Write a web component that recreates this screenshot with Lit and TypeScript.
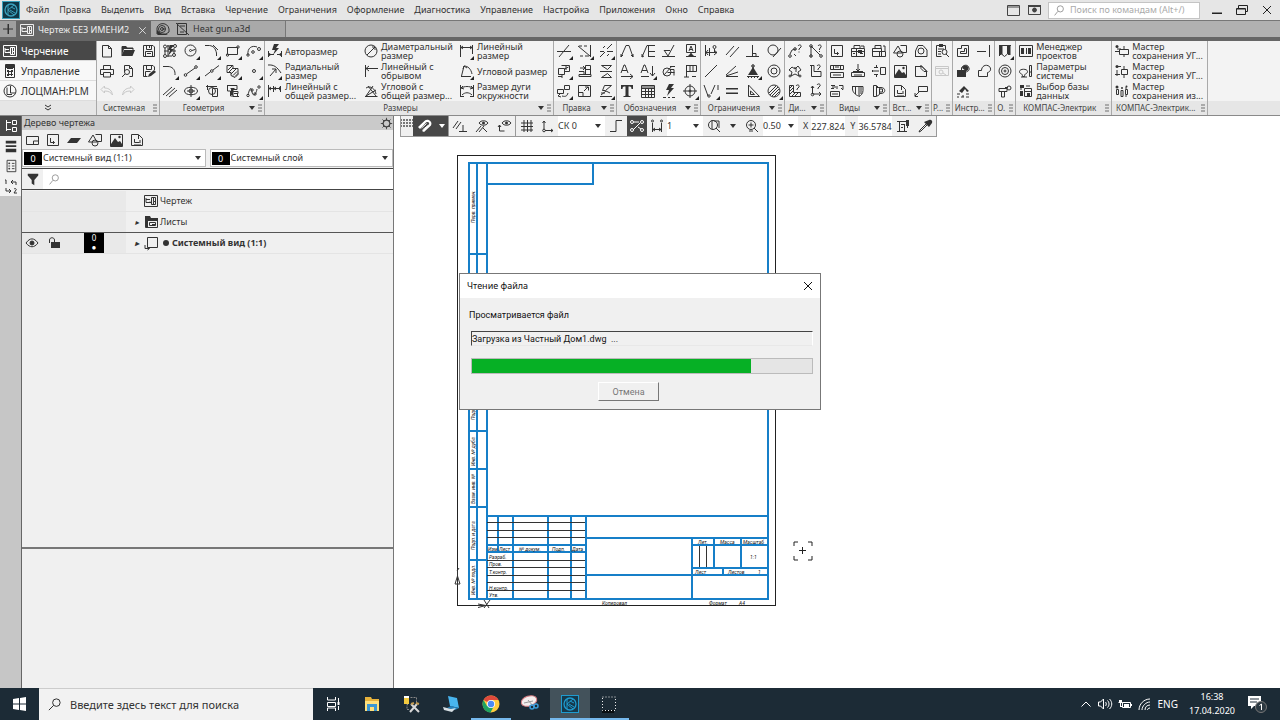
import { LitElement, html, css, svg, nothing } from "lit";
import { customElement } from "lit/decorators.js";

/** Circle expressed as a path segment. */
const c = (x: number, y: number, r: number) =>
  `M${x - r} ${y}a${r} ${r} 0 1 0 ${2 * r} 0a${r} ${r} 0 1 0 ${-2 * r} 0`;

/** name -> [stroked outline, filled shape]; 16x16 grid. */
const ICONS: Record<string, [string, string?]> = {
  sheet: ["M1.5 2.5h13v11h-13zM3 6.5h4M3 5v4.5h3l1-1M8.5 4.5h4v7h-4zM8.5 9.5h-3M10.5 4.5v4h2M10.5 8.5v3"],
  calc: ["M3.5 1.5h9v13h-9zM5 5.5h6M5 8.5h6M5 11.5h6M6.5 7v6M9.5 7v6", "M4 2h8v3H4zM5 7h2v2H5zM9 7h2v2H9zM5 11h2v2H5z"],
  plm: [c(8, 8, 6) + "M8.5 3v7h5M5 4.5v7h5"],
  newdoc: ["M3.5 2.5h6l3 3v8.5h-9zM9.5 2.5v3h3"],
  open: ["M2 12.5V3.5h4l1 1.5h6v2", "M1.5 13L4 7h11l-2.5 6zM2 3h4l1 2h6v1H4L2 11z"],
  save: ["M2.5 2.5h9.5l1.5 1.5v9.5h-11zM5.5 2.5v4h5v-4M8.5 3v2M4.5 13.5v-5h7v5M6 10.5h4"],
  print: ["M4.5 6V2.5h7V6M4.5 11.5h-3v-5h13v5h-3M4.5 9.5h7v4.5h-7z"],
  preview: ["M4.5 9V2.5h5l3 3v8h-3M9.5 2.5v3h3" + c(7, 9, 2.5) + "M5 11l-3 3"],
  saveas: ["M2.5 2.5h9.5l1.5 1.5v3M2.5 2.5v11h4M5.5 2.5v4h5v-4M4.5 13v-4.5h5", "M7 14l1-3 5-4 2 2-5 4z"],
  undo: ["M5.5 3L2 6.5l3.5 3.5V8c4 0 6 1 8 4-.5-4-3-7-8-7z"],
  redo: ["M10.5 3L14 6.5 10.5 10V8c-4 0-6 1-8 4 .5-4 3-7 8-7z"],
  autoline: [c(3, 3.5, 1.5) + c(13, 3, 1.5) + c(3, 13, 1.5) + c(12, 12, 1.5) + "M3 5v6M5 3h7M12 5v6M5 13h5M6 2v12M2 8h5M10 8h4", "M8 2h4L9 6h3l-6 7 2-6H6z"],
  circle: [c(7.5, 7.5, 5.5) + c(7.5, 7.5, 1) + "M9 7.5l3-1"],
  arcfillet: ["M1 2.5h4.5c4 .5 6 3 7 7.5V13M9 2l5 5"],
  rect: ["M2.5 4.5h10v7h-10z" + c(13, 4, 1.2) + c(2.5, 12, 1.2)],
  arc: ["M2 12C1 5 6 2 11 4" + c(13, 6, 1.5) + c(7, 9, 1.3) + c(2, 12, 1.2)],
  fillet: ["M1 3.5h5c4 0 7 3 7 7V12"],
  segment: ["M3.5 11L12 5" + c(2.5, 12, 1.3) + c(13, 4, 1.3)],
  auxline: ["M1 13L6.5 8.8M9 7l6-4.5" + c(7.8, 8, 1.3)],
  hatch: ["M2 2.5h6v3h5v6l-3 3-4-2v-3H2zM3 7l4-4M4 9l4-4M6 11l5-5M8 12.5l4-4M10 13.5l3-3"],
  point: [c(8, 8, 1.5)],
  parallel3: ["M1 12L10 4M4 13L13 5M7 14L15 7"],
  ellipse: ["M1.5 8c0-5 13-5 13 0s-13 5-13 0zM8 2v12M4 8h8" + c(8, 8, 2)],
  project: ["M2 3.5h11M3.5 2v5M8.5 5.5h5v8h-5z" + c(8, 8, 3.5)],
  collect: ["M2 2.5h10v4H8v7h6M2.5 2v6h3v5h3M5.5 5.5h4M6 8.5h7v2H9M12.5 11v3", "M6 6h2v6H6z"],
  spline: ["M2 12C4 4 5 4 6 9s4 3 5-3" + c(2, 12.5, 1.2) + c(6, 7, 1.2) + c(9, 11, 1.2) + c(13, 4, 1.2)],
  autodim: ["M1.5 8v6M14.5 8v6M2 11.5h5M10 11.5h4M3 10l-1 1.5L3 13M13 10l1 1.5-1 1.5", "M7 1h5L9 5h3l-6 7 2-5H5z"],
  raddim: ["M1 2c6-.5 9 2 13 8M3 13l6-7M9 10V6H5"],
  lindim: ["M1.5 2v12M6.5 3v6M13.5 3v6M2 5.5h12M4 4L2 5.5 4 7M9 4L7 5.5 9 7M12 4l2 1.5L12 7"],
  diadim: [c(8, 8, 6) + "M4 12L12 4M12 7V4H9"],
  breakdim: ["M2.5 2v12M3 5.5h12M6 3L3 5.5 6 8"],
  angcommon: ["M2 13.5h12.5M3 13L10 3M3 5c5-3 9 1 10 6M3 13l10-6M5 3l8 10"],
  lineardim: ["M1.5 2v12M13.5 2v9M2 4.5h11M4 3L2 4.5 4 6M11 3l2 1.5L11 6"],
  angdim: ["M2 13.5h10M2.5 13L5 3c4 0 7 3 8 8M4 6l1-3 3 2"],
  arcdim: ["M1.5 2v12M14.5 2v12M2 13.5h3M11 13.5h3M2 5c4-2 8-2 12 0M4 3L2 5l3 1M12 3l2 2-3 1M3 12c3-3 7-3 10 0"],
  trim: ["M1 8.5h14M3 14L13 2"],
  extend: ["M13.5 2v12M1 3l12 10M2 3h3M7 3h3M3 13h3M8 13h4"],
  split: ["M2 8.5h4M9 8.5h6M2 14L7 9M9 6l5-5M9 13l2-2M5 5l2-2"],
  move: ["M2.5 5.5h6v6h-6zM5.5 2.5h8v6h-5M8.5 6l4-2M2 13.5h4M6 12v3M10 2v5"],
  copy: ["M2 11.5h12v2H2zM2 8.5h5v3M8.5 2.5h5v9h-5zM3 5h5M6 3l2 2-2 2M9 6.5h4"],
  mirror: ["M2 8.5h12M3.5 2.5h10l-4 4zM3.5 14.5h10l-4-4z"],
  rotate: ["M1.5 6.5h6v4h-6zM8.5 2.5h5v4h-5zM5 14l-3-1 2-2M6 13c4 1 5 0 6-3"],
  scale: ["M1.5 2.5h12v11h-12zM2 9.5h4v4M7 8l4-4M8 4h3.5v3.5"],
  deform: ["M2 13.5h12M3 12l5-4 4 2M6.5 2.5h7l-6 5h-3zM3 10h4"],
  rough1: ["M2 14L7 2.5h3L14 14M12 12l2 2V11M2 11v3l2-2"],
  leader: ["M2 14L7 2.5h8M8 8.5h7M8 13.5h7M2 11v3l2-1M8.5 2v12"],
  roughness: ["M1 13.5h13M3 7l4 6L13 2M3 7.5h6"],
  base: ["M4.5 1.5h9v8h-9zM9 10v3M4 13.5h10M7 8l2-5 2 5M7.5 6.5h3", "M6 13l3-3 3 3z"],
  arrowA: ["M2 10L5 2h1l3 8M3 7.5h5M2 13.5h12M11 11l3 2.5L11 16"],
  arrowdown: ["M1 10L4 2h1l3 8M2 7.5h5M1 13.5h8M12.5 3v10M10 10l2.5 3L15 10"],
  weld: [c(6, 9, 4) + "M3 12l8-9M6.5 9.5h7M9 3.5h5M9 6.5h4v6"],
  flag: ["M4.5 2v12M4.5 2.5h10v6h-10zM8 2v6M11 2v6M2 14h5M10 13.5h4"],
  text: ["", "M2 2h12v4h-1.5C12.5 4 12 3.5 9.5 3.5V12c0 1 .5 1 2 1v1h-7v-1c1.5 0 2 0 2-1V3.5C4 3.5 3.5 4 3.5 6H2z"],
  table: ["M1.5 2.5h13v12h-13zM2 5.5h12M2 8.5h12M2 11.5h12M5.5 6v8M8.5 6v8M11.5 6v8M2 4h12"],
  bolt: ["M2 14.5h3M7 14.5h2M11 14.5h3", "M8 1h5l-3 4h3l-7 8 2-6H5z"],
  center: [c(8, 8, 5) + "M8 1v14M1 8h14" + c(8, 8, 1)],
  snap: ["M2.5 2v11M6.5 5v8M2 9.5h12M5 7L3 9.5 5 12M11 7l3 2.5-3 2.5M11.5 6v4" + c(11.5, 4, 1.5)],
  par: ["M2 12L10 3M6 14l9-10"],
  perp: ["M1 13.5h13M7.5 2v11M8 10.5h3v3"],
  tangent: [c(7, 7, 5) + "M7 14L15 5"],
  line: ["M2 14L14 2"],
  angle: ["M2 13.5h12M2 13l12-4M2 12L12 3"],
  fix: ["M8 2v4M2 13.5h12M3 15l1-1M6 15l1-1M9 15l1-1M12 15l1-1" + c(8, 3, 1.3), "M8 4l5 8H3z"],
  concentric: [c(8, 8, 6) + c(8, 8, 3)],
  sym: ["M1 2l4 11M12 2L8 11M15 2v5" + c(6, 13, 1.2)],
  equal: ["M2 6h12M2 10.5h12M2 5.5h12M2 10h12"],
  triangle: ["M3.5 2v11.5h11zM5.5 8v3.5h4z"],
  circlehatch: [c(8, 8, 6) + "M3 10l7-7M4 12l8-8M6 13l7-7M8 14l5-5"],
  dist: ["M3 11l2-4 4-1" + c(3, 13, 1.3) + c(8, 6, 1.3) + "M11 3c1-2 4-1 3 1l-2 2v1M12 8.5v1M7 11l2 2"],
  angmeas: ["M3 3l9 9M3 14V3" + c(3, 3, 1.3) + c(13, 13, 1.3) + c(3, 13, 1.3) + "M10 3c1-2 4-1 3 1l-1.5 2v1M11.5 8v1"],
  pts: ["M2 7l3-3 3 2 3-3 3 4-3 2 1 4-4-2-4 2 1-4z" + c(3, 13, 1) + c(13, 13, 1) + "M7 5c1-1 3 0 2 2v2"],
  area: ["M2 2.5h4v6h7v5H3.5V2.5M9 3c1-2 4-1 3 1l-2 2v1"],
  mass: ["M2.5 2.5h4v7h7v4h-11zM3 5l2-2M3 8l3-3M3 11l3-3M5 13l3-3M8 13l3-3M9 3c1-2 4-1 3 1l-2 2v1"],
  coords: ["M4.5 3v8h8M3 5l1.5-2L6 5M11 9l2 2-2 2M9 2c1-2 4-1 3 1l-2 2v1" + c(4.5, 11.5, 1.3)],
  view: ["M2.5 2.5h11v11h-11zM5.5 6v4.5h4M8 9l1.5 1.5L8 12"],
  views2: ["M1.5 5.5h13v8h-13zM4 5V2.5h6v3M2 8.5h12M6.5 6v8M10 10.5h3M3 10.5h2M11 3h3v2", "M8 7h4v3H8z"],
  views3: ["M1.5 5.5h9v8h-9zM4 5V2.5h6v3M2 8.5h8M12 3h2v5M8.5 8.5h6v5h-6z"],
  strip: ["M1.5 2.5h13v4h-13zM1.5 9.5h13v5h-13zM4.5 3v3M11.5 3v3M4 12h8M6 4h4"],
  section: ["M1.5 9.5h13v4h-13zM8 1v7M6 6l2 2 2-2M3 8.5h10M4 12h8"],
  break: ["M9.5 4.5h5v7h-5zM1 8h7M3 4.5h4M3 11.5h4M5.5 2v3M5.5 11v3M2 7l-1 1 1 1"],
  detail: ["M1.5 8.5h9v5h-9zM3 11h6M2 2.5h4M2 5.5h3M8 3v3M10 2.5h4v4M12 5l2 2M3 4h4"],
  local: ["M2 3.5h11v4c0 3-2 5-4 6V3.5M5.5 4v7M2.5 3v3c0 3 3 6 6 7M11 4v7"],
  cut: ["M2.5 2.5h3l3 3v6l-3 2h-3zM6 4.5h4c5 0 5 6 0 6H8M5.5 3v10M8.5 6h3v3h-3"],
  shapes: [c(8, 11, 3) + "M1.5 10L6 3l4 7zM8.5 2.5h6v7h-4"],
  detailshape: ["M2 13.5h12V7L10 2.5H5L2.5 8v5.5" + c(8, 8, 3)],
  image: ["M2.5 2.5h12v12h-12z", "M3 12l4-6 3 4 2-1 2 3v2H3z" + c(11.5, 5, 1.2)],
  insert: ["M2.5 3.5h6M2.5 3v10.5h11V9M8 2.5l6 6M8 2.5v3l3 3h3z"],
  link: ["M2.5 13.5v-11h7l4 4v7zM9.5 3v4M5.5 7v3.5h5M5 13h7M11 8v3"],
  callout: ["M5.5 3.5h9v5h-9zM6 9l-4 4M2 10v3.5h3"],
  report: ["M2.5 2.5h9v4M2.5 2.5v11h5M4 6h6M4 8.5h3M4 11h3" + c(10.5, 9, 2.5) + "M12 11l3 3", "M5 1h4v3H5z"],
  find: ["M1.5 3.5h13v9h-13zM2 5.5h12" + c(7, 9, 2) + "M9 10l3 2"],
  tool1: ["M2.5 5.5h4v-3h7v11h-11zM5.5 8.5h4v-3h2v5h-6z"],
  tool2: ["M1 8.5h9M13.5 2v12"],
  cloud: ["M6.5 7V5c1-3 6-4 7-1 2 3-1 5-3 5", "M2 7h9v7H2zM7 5c1-3 5-3 6-1s0 4-2 4z"],
  blob: ["M2.5 13.5v-6h3c0-4 4-7 8-4 3 4-1 6-2 6v4z"],
  pen: ["M2 11h3M7 13h2M11 11h3M2 14h2M6 14h3M11 14h3", "M4 8l5-5 5 5-2 1-2-3-3 4z"],
  hole: ["M2 2.5h12M4.5 3v8l3 2.5 3-2.5V3M2.5 3v10M13 3v9M5 3v9", "M2 3h2v9H2zM11 3h2v9h-2z"],
  hole2: [c(8, 8, 6) + c(8, 8, 3.5) + c(8, 8, 1)],
  bolt3: ["M2 5.5h8v3H2zM4.5 9v5h3V9M8 4.5h3" + c(12, 5, 2)],
  proj: ["M1.5 2.5h13v11h-13z", "M3 5h3v6H3zM8 5h1v6H8zM10 5h3v6h-3z"],
  params: ["M1.5 8.5c0-3 8-3 8 0s-3 1-3 5h-2c0-4-3-2-3-5zM11.5 2.5h2v11h-2zM11 9h3M3 14h6"],
  db: ["M6.5 5.5h7v8h-7zM7 8.5h6M2 4h3M2 6h2M2 9h3M2 12h3M8 3h4", "M2 2h4v3H2zM2 8h3v5H2zM9 10h3v3H9z"],
  wiz1: ["M5.5 6.5h9v5h-9zM1 8.5h4M3 6h4M10 3v3M10 12v2", c(3, 3.5, 1.5)],
  wiz2: ["M7.5 6.5h6v5h-6zM1 11.5h5M4 3.5h3M10 3v3M10 12v3M3 7v6", c(3, 3.5, 1.5)],
  wiz3: ["M2.5 6.5h2v5h-2zM7 7.5h2v6H7zM11.5 6.5h2v5h-2zM12 4v2M12 12v2", c(3, 4, 1.5) + c(8, 5, 1) + c(12.5, 3.5, 1)],
  clip: ["M3 8L8 3.5c2-1.5 6 0 5 3.5l-6 5.5M4.5 10l5-4.5M5.5 12l6-5", "M1 9l7-6.5c3-2 8 1 6 5L7 14l-2-1 7-6.5c1-2-1-3-3-2L3 11z"],
  snaps1: ["M1 10L6 3M4 11L9 4M7 13.5h8M11 7v6"],
  eyepar: ["M2 14L7 8M5 14l5-6M5 5c2-3 7-3 9 0-2 3-7 3-9 0M9 10l4 4", c(9.5, 5, 1.5)],
  eyedown: ["M3.5 7v6h5M2 9l1.5-2L5 9M6 5c2-3 7-3 9 0-2 3-7 3-9 0", c(10.5, 5, 1.5)],
  grid: ["M5 2v12M8.5 2v12M12 2v12M2 5h12M2 8.5h12M2 12h12"],
  cs: ["M4 3v8M5 12.5h8M2.5 5L4 3l1.5 2M11 11l2 1.5-2 1.5" + c(4, 12.5, 1.3)],
  step: ["M2 13.5h6v-11h6"],
  constr: ["M4 12l7-7M5 4h5M9 9l3 2" + c(3, 4, 1.5) + c(13, 4, 1.5) + c(3, 12, 1.5) + c(13, 12, 1.5)],
  stepdist: ["M3.5 5v9M12.5 5v9M4 11.5h8M6 10l-2 1.5L6 13M10 10l2 1.5-2 1.5" + c(3.5, 3, 1) + c(12.5, 3, 1)],
  zoomwin: [c(7, 7, 4.5) + "M6 2v9M10 10l4 4M8 3h5v7"],
  zoomin: [c(7, 7, 4.5) + "M4.5 7h5M7 4.5v5M10 10l4 4M5 13h4"],
  coordset: ["M2 3.5h12M4.5 4v9M6 6.5h4M9.5 7v6M12.5 4v6M2 13.5h10M6 9.5h2", "M11 2h3v6h-3z"],
  dropper: ["M9 6l-6 6-1 2 2-1 6-6", "M7 4l5 5 3-4c1-2-1-4-3-3z"],
  tree: ["M3.5 2v11M4 4.5h4M4 11.5h4M9.5 2.5h4v4h-4zM9.5 9.5h4v4h-4z"],
  layers: ["", "M2 2h12v3H2zM2 7h12v2H2zM2 11h12v4H2z"],
  listprops: ["M3.5 1.5h10v13h-10zM5 5h2M9 5h3M5 8h2M9 8h3M5 11h2M9 11h3M6 4v2M6 10v2"],
  onetwo: ["M2 2h1v4M8 4h5v3M10 2L8 4l2 2M3 10v3h4M6 11l2 2-2 2M11 11c1-1 3 0 2 1l-2 3h3"],
  page: ["M2.5 4.5h12v8h-12zM9.5 12v-3h5"],
  slab: ["", "M5 6h10l-4 5H1z"],
  folder: ["M2.5 4.5h12v9h-12zM6.5 8.5h6v3h-6z", "M2 2h5l1 2h7v3H5v6H2zM9 10h3v2H9z"],
  frame: ["M4.5 2.5h10v10h-10zM2 10v3.5h4M4.5 15l2-1.5-2-1.5"],
  eye: ["M2 8c4-5.5 8-5.5 12 0-4 5-8 5-12 0" + c(8, 8, 2), c(8, 8, 2)],
  lock: ["M3.5 8V5c0-3 5-3 5 0v2", "M5 7h9v6H5z"],
  funnel: ["", "M2 2h12v2L9.5 9v6l-3-2V9L2 4z"],
  lens: [c(9, 6, 3.8) + "M6 9l-4 5"],
  gear: [c(8, 8, 4.5) + c(8, 8, 4) + "M8 1v3M8 12v3M1 8h3M12 8h3M3 3l2 2M11 11l2 2M13 3l-2 2M5 11l-2 2"],
  win: ["M2.5 3.5h12v10h-12zM3 5h11"],
  wingear: ["M2.5 3.5h12v9h-12z" + c(8.5, 8, 2), "M2 3h13v2H2zM7 6h3v4H7z"],
  min: ["M3 11h10M3 11.5h10"],
  restore: ["M2.5 6.5h9v6h-9zM4.5 6V3.5h9v6h-2M3 7h8"],
  close: ["M4 4l8 8M12 4l-8 8"],
  plus: ["M8 3v10M3 8h10M8.5 3v10"],
  gun: [c(7, 8, 3.5) + "M2 12V7c1-6 11-6 12 1v3l-3 2H2zM7 8h3" + c(7, 8, 1.5), "M2 12V9l5 4h6l-2 1H3z"],
  nodraw: ["M3.5 2.5h9v11h-9zM2 2l13 12M6 5h5M6 11h4"],
};

const icon = (name: string, size = 16) => {
  const [d, f] = ICONS[name];
  return html`<svg class="ic" width=${size} height=${size} viewBox="0 0 16 16" aria-hidden="true">
    ${f ? svg`<path class="fill" d=${f} />` : nothing}${d ? svg`<path class="line" d=${d} />` : nothing}
  </svg>`;
};

type Group = { title: string; cols: number; more?: boolean; tools: string[] };

/* A trailing "*" marks a tool that opens a list of variants, "-" a disabled one. */
const left: Group[] = [
  { title: "Системная", cols: 3, tools: ["newdoc", "open", "save", "print", "preview", "saveas", "undo-", "redo-"] },
  {
    title: "Геометрия", cols: 5, more: true,
    tools: ["autoline", "circle*", "arcfillet*", "rect*", "arc*", "fillet*", "segment*", "auxline*", "hatch*", "point*", "parallel3", "ellipse*", "project", "collect", "spline*"],
  },
];
const right: Group[] = [
  { title: "Правка", cols: 3, more: true, tools: ["trim*", "extend*", "split*", "move*", "copy", "mirror", "rotate*", "scale", "deform*"] },
  {
    title: "Обозначения", cols: 4, more: true,
    tools: ["rough1", "leader", "roughness", "base", "arrowA", "arrowdown*", "weld", "flag", "text", "table", "bolt", "center*"],
  },
  {
    title: "Ограничения", cols: 4, more: true,
    tools: ["snap", "par", "perp", "tangent", "line", "angle", "fix*", "concentric", "sym*", "equal", "triangle", "circlehatch*"],
  },
  { title: "Ди...", cols: 2, more: true, tools: ["dist", "angmeas", "pts", "area", "mass", "coords"] },
  { title: "Виды", cols: 3, more: true, tools: ["view", "views2", "views3", "strip", "section", "break", "detail", "local", "cut"] },
  { title: "Вст...", cols: 2, more: true, tools: ["shapes", "detailshape", "image", "insert", "link", "callout"] },
  { title: "Р...", cols: 1, tools: ["report", "find-"] },
  { title: "Инстр...", cols: 2, tools: ["tool1", "tool2", "cloud", "blob", "pen"] },
  { title: "О.", cols: 1, tools: ["hole*", "hole2", "bolt3"] },
];

const dims: [string, string, boolean][] = [
  ["autodim", "Авторазмер", false], ["diadim", "Диаметральный\nразмер", false], ["lineardim", "Линейный\nразмер", true],
  ["raddim", "Радиальный\nразмер", true], ["breakdim", "Линейный с\nобрывом", false], ["angdim", "Угловой размер", true],
  ["lindim", "Линейный с\nобщей размер...", false], ["angcommon", "Угловой с\nобщей размер...", false], ["arcdim", "Размер дуги\nокружности", false],
];

@customElement("app-root")
export class AppRoot extends LitElement {
  static styles = css`
    :host {
      display: flex; flex-direction: column; height: 100vh; overflow: hidden;
      font-family: "Noto Sans", "Open Sans", sans-serif; font-size: 9px; line-height: 14px; color: #333; background: #fff;
    }
    * { box-sizing: border-box; }
    button, input, select { font: inherit; color: inherit; background: none; border: 0; padding: 0; margin: 0; min-width: 0; border-radius: 0; outline: 0; }
    select { appearance: none; }
    .ic { display: block; flex: none; }
    .line { fill: none; stroke: currentColor; }
    .fill { fill: currentColor; }
    .grow { flex: 1; }

    .menubar { flex: none; display: flex; align-items: center; height: 20px; background: #e6e6e6; }
    .logo { width: 18px; height: 18px; margin: 0 6px 0 2px; }
    .menu { display: flex; gap: 10px; white-space: nowrap; }
    .wincmd { display: flex; align-items: center; gap: 5px; margin-right: 6px; color: #444; }
    .cmdsearch { display: flex; align-items: center; gap: 4px; width: 152px; height: 17px; padding: 0 4px; background: #fff; border: 1px solid #c4c4c4; color: #888; }
    .cmdsearch input { flex: 1; }
    .cmdsearch input::placeholder { color: #aaa; opacity: 1; }
    .winbtns { display: flex; gap: 9px; margin: 0 5px 0 9px; color: #222; }

    .tabs { flex: none; display: flex; height: 21px; background: #b1b1b1; border-top: 1px solid #777; border-bottom: 4px solid #666; }
    .addtab { width: 16px; background: #9f9f9f; }
    .addtab .ic { margin: 0 auto; }
    .tab { display: flex; align-items: center; gap: 3px; padding: 0 4px; white-space: nowrap; }
    .tab.on { width: 135px; background: #666; color: #eee; height: 18px; padding: 0 2px 0 3px; }
    .tab.other { width: 135px; border-right: 1px solid #777; background: #a9a9a9; }

    .ribbon { flex: none; display: flex; height: 75px; background: #f3f3f3; border-bottom: 1px solid #8a8a8a; }
    .nav { width: 96px; display: flex; flex-direction: column; background: #f8f8f8; }
    .nav button { height: 20px; display: flex; align-items: center; gap: 3px; padding-left: 2px; border-bottom: 1px solid #ddd; font-size: 10px; }
    .nav button.on { background: #484848; color: #fff; }
    .nav button.fold { flex: 1; justify-content: center; padding: 0; background: #e6e6e6; border: 0; }
    .group { flex: none; display: flex; flex-direction: column; box-shadow: inset 1px 0 #a9a9a9; }
    .rest { flex: 1; }
    .cells { display: grid; grid-auto-rows: 20px; grid-template-rows: repeat(3, 20px); flex: 1; }
    .c1 { grid-template-columns: 21px; } .c2 { grid-template-columns: repeat(2, 21px); }
    .c3 { grid-template-columns: repeat(3, 21px); } .c4 { grid-template-columns: repeat(4, 21px); }
    .c5 { grid-template-columns: repeat(5, 21px); }
    .tool { position: relative; display: flex; align-items: center; justify-content: center; }
    .tool.off { color: #c8c8c8; }
    .var::after { content: ""; position: absolute; right: 1px; bottom: 1px; border: 2px solid #222; border-top-color: transparent; border-left-color: transparent; }
    .foot { height: 14px; display: flex; align-items: center; justify-content: flex-end; gap: 3px; padding: 0 2px 0 1px; margin-left: 1px; font-size: 8px; line-height: 14px; background: #e6e6e6; white-space: nowrap; color: #444; }
    .foot span { flex: 1; text-align: center; }
    .down { width: 0; height: 0; flex: none; border: 3px solid transparent; border-top: 4px solid #333; border-bottom: 0; pointer-events: none; }
    .grip { flex: none; width: 4px; height: 8px; background: radial-gradient(circle at 1px 1px, #aaa 1px, transparent 1px) 0 0 / 2px 3px; }
    .dims { grid-template-columns: 96px 96px 97px; }
    .wide { grid-template-columns: 96px; }
    .lab { display: flex; align-items: center; gap: 2px; padding-left: 3px; line-height: 9px; text-align: left; position: relative; white-space: pre; }
    .lab.var::after { left: 14px; right: auto; }

    .main { flex: 1; display: flex; min-height: 0; }
    .rail { flex: none; width: 22px; background: #c6c6c6; border-right: 1px solid #666; }
    .rail button { width: 100%; height: 20px; display: flex; align-items: center; justify-content: center; background: #f2f2f2; }
    .rail button.on { background: #484848; color: #fff; }
    .tree { flex: none; width: 372px; display: flex; flex-direction: column; background: #f0f0f0; border-right: 1px solid #777; }
    .title { height: 14px; display: flex; align-items: center; justify-content: space-between; padding: 0 0 0 2px; background: #cacaca; }
    .strip { height: 19px; display: flex; align-items: center; gap: 5px; padding-left: 2px; }
    .picks { height: 20px; display: flex; gap: 4px; padding-bottom: 1px; border-bottom: 1px solid #444; }
    .pick { flex: 1; display: flex; align-items: center; background: #fff; border: 1px solid #bbb; padding: 0 4px 0 1px; }
    .pick select { flex: 1; }
    .zero { width: 18px; height: 13px; line-height: 13px; text-align: center; background: #000; color: #fff; margin-right: 1px; }
    .filter { height: 21px; display: flex; align-items: center; background: #fff; border-bottom: 1px solid #444; color: #333; }
    .filter .fun { width: 21px; height: 20px; background: #f0f0f0; display: flex; align-items: center; justify-content: center; }
    .filter input { flex: 1; margin-left: 6px; }
    .look { color: #888; margin-left: 5px; }
    .rows { flex: none; height: 359px; border-bottom: 2px solid #777; padding-top: 1px; }
    .row { height: 21px; display: flex; border-bottom: 1px solid #e4e4e4; }
    .row.cur { margin-top: -1px; border-top: 1px solid #555; font-weight: 700; height: 22px; }
    .flags { width: 104px; display: flex; align-items: center; background: #e9e9e9; padding-left: 2px; }
    .cur .flags .ic + .ic { margin-left: 6px; }
    .layer { width: 20px; height: 20px; margin-left: 22px; background: #000; color: #fff; font-size: 8px; line-height: 9px; text-align: center; font-weight: 400; }
    .name { flex: 1; display: flex; align-items: center; gap: 1px; padding-left: 6px; }
    .twist { width: 10px; font-size: 8px; text-align: center; }
    .dot { width: 6px; height: 6px; border-radius: 50%; background: #333; margin: 0 2px 0 3px; }

    .canvas { position: relative; flex: 1; background: #fff; min-width: 0; }
    .bar { display: flex; align-items: center; width: max-content; height: 21px; margin-left: 6px; background: #f0f0f0; border: 1px solid #999; border-top: 0; }
    .bar > button { width: 22px; height: 20px; display: flex; align-items: center; justify-content: center; }
    .bar > button.dark { background: #484848; color: #fff; }
    .bar > button.magnet { width: 36px; gap: 6px; border-right: 1px solid #999; }
    .magnet .down { border-top-color: #fff; }
    .bar > .down { margin: 0 5px; }
    .bar > button.sep { width: 23px; border-right: 1px solid #999; }
    .bar > button.slim { width: 20px; }
    .bargrip { width: 12px; height: 8px; align-self: flex-start; margin-top: 3px; background: radial-gradient(circle at 1px 1px, #777 1px, transparent 1px) 2px 0 / 3px 3px; }
    .combo { display: flex; align-items: center; height: 20px; background: #fff; padding-right: 4px; }
    .combo select { flex: 1; overflow: hidden; white-space: nowrap; }
    .combo.cs { width: 47px; } .combo.num { width: 36px; } .combo.zoomc { width: 35px; }
    .xy { display: flex; align-items: center; height: 20px; gap: 3px; padding-left: 5px; }
    .xy input { width: 34px; height: 20px; background: #fff; }
    .sheet { display: block; margin: 13px 0 0 56px; }
    .edge { fill: none; stroke: #222; }
    .thick { fill: none; stroke: #167fc8; stroke-width: 2; }
    .thin { fill: none; stroke: #333; }
    .gost { font: italic 5px Roboto, sans-serif; fill: #111; }
    .cursor { position: absolute; left: 398px; top: 424px; }

    .dialog { position: absolute; left: 65px; top: 157px; width: 362px; background: #f0f0f0; border: 1px solid #777; color: #111; line-height: 14px; }
    .dtitle { height: 24px; display: flex; align-items: center; justify-content: space-between; padding: 0 4px 0 7px; background: #fff; }
    .dbody { padding: 9px 7px 8px 9px; display: flex; flex-direction: column; font-family: Roboto, "Liberation Sans", sans-serif; }
    .dbody label { height: 16px; line-height: 16px; }
    .file { height: 15px; margin: 8px 0 12px 2px; border-top: 1px solid #444; border-left: 1px solid #444; border-bottom: 1px solid #e8e8e8; border-right: 1px solid #fff; }
    progress { appearance: none; display: block; width: auto; height: 16px; margin-left: 2px; background: #e5e5e5; border: 1px solid #bbb; }
    progress::-webkit-progress-bar { background: #e5e5e5; }
    progress::-webkit-progress-value { background: #06b025; }
    .cancel { align-self: center; width: 61px; height: 19px; margin: 8px 25px 0 0; color: #777; border: 1px solid #fff; border-right-color: #777; border-bottom-color: #777; }

    .taskbar { flex: none; display: flex; align-items: center; height: 32px; background: #1c2b36; color: #fff; }
    .start { width: 39px; display: flex; justify-content: center; }
    .tsearch { display: flex; align-items: center; gap: 8px; width: 274px; height: 32px; padding: 0 8px; background: #f2f2f2; color: #222; font-size: 11px; border-top: 1px solid #ccc; }
    .tsearch input { flex: 1; }
    .tsearch input::placeholder { color: #333; opacity: 1; }
    .apps { display: flex; width: 316px; }
    .app { flex: 1; height: 32px; display: flex; align-items: center; justify-content: center; border-bottom: 2px solid transparent; border-top: 2px solid transparent; }
    .app.run { border-bottom-color: #76b9ed; }
    .app.on { background: #43525b; }
    .tray { display: flex; align-items: center; gap: 5px; }
    .lang { margin: 0 6px 0 2px; font-size: 10px; }
    .clock { text-align: center; line-height: 14px; }
    .note { margin: 0 13px 0 7px; }
  `;

  private tool(t: string) {
    const name = t.replace(/[*-]$/, "");
    const off = t.endsWith("-");
    return html`<button class="tool ${t.endsWith("*") ? "var" : ""} ${off ? "off" : ""}" aria-label=${name} ?disabled=${off}>${icon(name)}</button>`;
  }

  private foot(title: string, more = false) {
    return html`<div class="foot"><span>${title}</span>${more ? html`<i class="down"></i>` : nothing}<i class="grip"></i></div>`;
  }

  private group(g: Group) {
    return html`<section class="group"><div class="cells c${g.cols}">${g.tools.map((t) => this.tool(t))}</div>${this.foot(g.title, g.more)}</section>`;
  }

  private label(name: string, text: string, variants = false) {
    return html`<button class="lab ${variants ? "var" : ""}">${icon(name)}<span>${text}</span></button>`;
  }

  private kompas(size: number, bg: string, fg: string) {
    return html`<svg class="ic" width=${size} height=${size} viewBox="0 0 18 18" aria-hidden="true">
      <rect x=".5" y=".5" width="17" height="17" fill=${bg} stroke=${fg} />
      <circle cx="9" cy="9" r="6" fill="none" stroke=${fg} stroke-width="1.3" />
      <path d="M6 4v10M6 9l6-5M6 9l6 5M8 9l5 3M9 6l4 2" fill="none" stroke=${fg} />
    </svg>`;
  }

  private sheet() {
    const side: [number, number, string][] = [
      [475, 223, "Перв. примен."], [475, 420, "Подп."], [475, 466, "Инв. № дубл."], [475, 504, "Взам. инв. №"], [475, 550, "Подп. и дата"], [475, 595, "Инв. № подл."],
    ];
    const words: [number, number, string][] = [
      [488, 551, "Изм"], [499, 551, "Лист"], [519, 551, "№ докум."], [552, 551, "Подп."], [572, 551, "Дата"],
      [489, 559, "Разраб."], [489, 566, "Пров."], [489, 574, "Т.контр."], [489, 590, "Н.контр."], [489, 597, "Утв."],
      [698, 544, "Лит."], [720, 544, "Масса"], [743, 544, "Масштаб"], [750, 559, "1:1"], [695, 574, "Лист"], [728, 574, "Листов"], [758, 574, "1"],
      [602, 605, "Копировал"], [709, 605, "Формат"], [739, 605, "A4"],
    ];
    return html`<svg class="sheet" width="330" height="462" viewBox="450 150 330 462">
      <rect class="edge" x="457.5" y="155.5" width="318" height="450" />
      <path class="thick" d="M469 163h299v436H469zM477 163v436M487 163v436M469 254h18M469 431h18M469 469h18M469 507h18M469 560h18
        M487 184h106v-21M487 516h281M487 545h99M487 552h99M498 516v36M513 516v83M548 516v83M571 516v83M586 516v83
        M586 538h182M586 575h182M692 538v61M692 545h76M692 568h76M714 538v30M741 538v30M723 568v7" />
      <path class="thin" d="M487 522.5h98M487 530.5h98M487 537.5h98M487 560.5h98M487 567.5h98M487 575.5h98M487 582.5h98M487 590.5h98M699.5 546v21M706.5 546v21
        M457.5 585v-14M455 584l2.5-8 2.5 8zM457 571l2-3M476 605.5h7M478 604l8 1.5-8 2M484 600l5 8M490 600l-6 8" />
      ${words.map(([x, y, t]) => svg`<text class="gost" x=${x} y=${y}>${t}</text>`)}
      ${side.map(([x, y, t]) => svg`<text class="gost" transform="translate(${x} ${y}) rotate(-90)">${t}</text>`)}
    </svg>`;
  }

  private combo(kind: string, label: string, value: string) {
    return html`<span class="combo ${kind}"><select aria-label=${label}><option>${value}</option></select><i class="down"></i></span>`;
  }

  render() {
    const menu = ["Файл", "Правка", "Выделить", "Вид", "Вставка", "Черчение", "Ограничения", "Оформление", "Диагностика", "Управление", "Настройка", "Приложения", "Окно", "Справка"];
    return html`
      <header class="menubar">
        <span class="logo">${this.kompas(18, "#103646", "#3ba0bd")}</span>
        <nav class="menu">${menu.map((m) => html`<button>${m}</button>`)}</nav>
        <span class="grow"></span>
        <span class="wincmd">${icon("win")}${icon("wingear")}</span>
        <label class="cmdsearch">${icon("lens", 13)}<input aria-label="Поиск по командам" placeholder="Поиск по командам (Alt+/)" /></label>
        <span class="winbtns">
          <button aria-label="Свернуть">${icon("min")}</button><button aria-label="Восстановить">${icon("restore")}</button><button aria-label="Закрыть">${icon("close")}</button>
        </span>
      </header>

      <div class="tabs">
        <button class="addtab" aria-label="Создать">${icon("plus")}</button>
        <button class="tab on">${icon("sheet")}Чертеж БЕЗ ИМЕНИ2<span class="grow"></span>${icon("close", 13)}</button>
        <button class="tab other">${icon("gun")}${icon("nodraw")}Heat gun.a3d</button>
      </div>

      <div class="ribbon">
        <nav class="nav">
          <button class="on">${icon("sheet")}Черчение</button>
          <button>${icon("calc")}Управление</button>
          <button>${icon("plm")}ЛОЦМАН:PLM</button>
          <button class="fold" aria-label="Свернуть список"><svg class="ic" width="8" height="8" viewBox="0 0 8 8"><path class="line" d="M1 1l3 2 3-2M1 4l3 2 3-2" /></svg></button>
        </nav>
        ${left.map((g) => this.group(g))}
        <section class="group">
          <div class="cells dims">${dims.map(([i, t, v]) => this.label(i, t, v))}</div>
          ${this.foot("Размеры", true)}
        </section>
        ${right.map((g) => this.group(g))}
        <section class="group">
          <div class="cells wide">${this.label("proj", "Менеджер\nпроектов")}${this.label("params", "Параметры\nсистемы")}${this.label("db", "Выбор базы\nданных")}</div>
          ${this.foot("КОМПАС-Электрик")}
        </section>
        <section class="group">
          <div class="cells wide">${this.label("wiz1", "Мастер\nсохранения УГ...")}${this.label("wiz2", "Мастер\nсохранения УГ...")}${this.label("wiz3", "Мастер\nсохранения из...")}</div>
          ${this.foot("КОМПАС-Электрик...")}
        </section>
        <div class="group rest"><span class="grow"></span><div class="foot"></div></div>
      </div>

      <main class="main">
        <div class="rail">
          <button class="on" aria-label="Дерево">${icon("tree")}</button><button aria-label="Слои">${icon("layers", 14)}</button>
          <button aria-label="Параметры">${icon("listprops", 14)}</button><button aria-label="Переменные">${icon("onetwo")}</button>
        </div>
        <aside class="tree">
          <div class="title">Дерево чертежа<button aria-label="Настройка">${icon("gear", 13)}</button></div>
          <div class="strip">${["page", "view", "slab", "shapes", "image", "link"].map((n) => html`<button aria-label=${n}>${icon(n)}</button>`)}</div>
          <div class="picks">
            <label class="pick"><span class="zero">0</span><select><option>Системный вид (1:1)</option></select><i class="down"></i></label>
            <label class="pick"><span class="zero">0</span><select><option>Системный слой</option></select><i class="down"></i></label>
          </div>
          <div class="filter"><button class="fun" aria-label="Фильтр">${icon("funnel", 14)}</button><span class="look">${icon("lens", 13)}</span><input aria-label="Поиск в дереве" /></div>
          <div class="rows">
            <div class="row"><span class="flags"></span><span class="name"><i class="twist"></i>${icon("sheet")}Чертеж</span></div>
            <div class="row"><span class="flags"></span><span class="name"><i class="twist">▸</i>${icon("folder")}Листы</span></div>
            <div class="row cur">
              <span class="flags">${icon("eye")}${icon("lock")}<span class="layer">0<br />●</span></span>
              <span class="name"><i class="twist">▸</i>${icon("frame")}<i class="dot"></i>Системный вид (1:1)</span>
            </div>
          </div>
        </aside>

        <section class="canvas">
          <div class="bar">
            <span class="bargrip"></span>
            <button class="dark magnet" aria-label="Привязки">${icon("clip")}<i class="down"></i></button>
            ${["snaps1", "eyepar"].map((n) => html`<button aria-label=${n}>${icon(n)}</button>`)}
            <button class="sep" aria-label="Показать">${icon("eyedown")}</button>
            <button aria-label="Сетка">${icon("grid")}</button>
            <button class="slim" aria-label="Система координат">${icon("cs")}</button>
            ${this.combo("cs", "Система координат", "СК 0")}
            <button aria-label="Ортогональное черчение">${icon("step")}</button>
            <button class="dark slim" aria-label="Параметрический режим">${icon("constr")}</button>
            <button class="slim" aria-label="Шаг курсора">${icon("stepdist")}</button>
            ${this.combo("num", "Шаг", "1")}
            <button aria-label="Масштаб">${icon("zoomwin")}</button>
            <i class="down"></i>
            <button aria-label="Увеличить">${icon("zoomin")}</button>
            ${this.combo("zoomc", "Масштаб", "0.50")}
            <label class="xy">X<input value="227.8244" /></label>
            <label class="xy">Y<input value="36.57842" /></label>
            <button aria-label="Координаты">${icon("coordset")}</button>
            <button aria-label="Пипетка">${icon("dropper")}</button>
          </div>
          ${this.sheet()}
          <svg class="cursor" width="22" height="22" viewBox="0 0 22 22"><path class="edge" d="M2 6V2h4M16 2h4v4M2 16v4h4M20 16v4h-4M10.5 7v7M7 10.5h7" /></svg>

          <div class="dialog" role="dialog" aria-label="Чтение файла">
            <div class="dtitle">Чтение файла<button aria-label="Закрыть">${icon("close")}</button></div>
            <div class="dbody">
              <label for="file">Просматривается файл</label>
              <input id="file" class="file" readonly value="Загрузка из Частный Дом1.dwg  ..." />
              <progress aria-label="Загрузка" max="100" value="82"></progress>
              <button class="cancel">Отмена</button>
            </div>
          </div>
        </section>
      </main>

      <footer class="taskbar">
        <button class="start" aria-label="Пуск"><svg class="ic" width="14" height="14" viewBox="0 0 14 14"><path class="fill" d="M0 2l6-1v5.5H0zM7 1l6-1v6.5H7zM0 7.5h6V13l-6-1zM7 7.5h6V14l-6-1z" /></svg></button>
        <label class="tsearch"><svg class="ic" width="15" height="15" viewBox="0 0 16 16"><path class="line" d="M6 6a4 4 0 1 0 8 0a4 4 0 1 0-8 0M7 9l-5 5" /></svg><input aria-label="Поиск" placeholder="Введите здесь текст для поиска" /></label>
        <div class="apps">
          <button class="app" aria-label="Представление задач"><svg class="ic" width="16" height="16" viewBox="0 0 16 16"><path class="line" d="M2.5 1v3h8V1M2.5 6.5h8v4h-8zM2.5 15v-3h8v3M13.5 2v5M13.5 10v4" /><path class="fill" d="M12.5 6h2v3h-2z" /></svg></button>
          <button class="app" aria-label="Проводник"><svg class="ic" width="18" height="18" viewBox="0 0 18 18"><path fill="#e8b33c" d="M2 2h6l1 2h7v12H2z" /><path fill="#ffdf7a" d="M2 6h14v10H2z" /><path fill="#3b96d2" d="M4 9h10v7h-3v-4H7v4H4z" /></svg></button>
          <button class="app" aria-label="Инструменты"><svg class="ic" width="18" height="18" viewBox="0 0 18 18"><path fill="#f3ca3f" d="M1 1h5v8H1z" /><path fill="#fff" d="M1 1h5v2H1z" /><path d="M7.5 2.5h6v6M5 9.5h-1v5h3" fill="none" stroke="#888" stroke-dasharray="2 1" /><path d="M7 17l7-8M8 9l8 8" stroke="#d8d8d8" stroke-width="2" /><path d="M8 9l3-1M13 8l3 1" stroke="#c49c52" stroke-width="2" /></svg></button>
          <button class="app" aria-label="Удалённый доступ"><svg class="ic" width="18" height="18" viewBox="0 0 18 18"><path fill="#48b5ef" d="M6 1l9 2 2 10-9-2z" /><path fill="#2582bd" d="M9 11l8 2-4 2-8-2z" /><path fill="#d7e0e5" d="M1 12l8 2 5-1-4 4-8-2z" /></svg></button>
          <button class="app run" aria-label="Chrome"><svg class="ic" width="18" height="18" viewBox="0 0 18 18"><circle cx="9" cy="9" r="8.5" fill="#ffcd40" /><path fill="#df4a3c" d="M9 9L1.5 5A8.5 8.5 0 0 1 16.5 5H9z" /><path fill="#1ea362" d="M1.5 5A8.5 8.5 0 0 0 8.5 17.5L12 11 9 9 5 11z" /><circle cx="9" cy="9" r="4" fill="#fff" /><circle cx="9" cy="9" r="3.2" fill="#4c8bf5" /></svg></button>
          <button class="app" aria-label="Ножницы"><svg class="ic" width="20" height="20" viewBox="0 0 20 20"><ellipse cx="9" cy="7" rx="8" ry="5" transform="rotate(-18 9 7)" fill="#f4eeee" stroke="#d37b80" /><path d="M4 9l9-2M8 6l5 6" stroke="#999" /><circle cx="12" cy="13" r="2" fill="none" stroke="#3a9bd8" stroke-width="1.5" /><circle cx="16" cy="12" r="2" fill="none" stroke="#3a9bd8" stroke-width="1.5" /></svg></button>
          <button class="app run on" aria-label="КОМПАС">${this.kompas(18, "#16394c", "#1f9bcf")}</button>
          <button class="app run" aria-label="Запись экрана"><svg class="ic" width="18" height="18" viewBox="0 0 18 18"><path fill="#0a0f12" d="M2 15h12v3H2z" /><path d="M2.5 2h13v13.5h-13z" fill="none" stroke="#eee" stroke-dasharray="1 2" /></svg></button>
        </div>
        <span class="grow"></span>
        <div class="tray">
          <svg class="ic" width="12" height="12" viewBox="0 0 12 12"><path class="line" d="M1.5 8.5L6 4l4.5 4.5" /></svg>
          <svg class="ic" width="16" height="16" viewBox="0 0 16 16"><path class="line" d="M1.5 6v4h2l3 3V3l-3 3zM8.5 6c1 1 1 3 0 4M10.5 4.5c2 2 2 5 0 7M12.5 3c3 3 3 7 0 10" /></svg>
          <svg class="ic" width="14" height="14" viewBox="0 0 14 14"><path class="line" d="M4.5 5.5h8v5h-8zM2.5 3v7M.5 5.5h4M3 9.5h2M13.5 7v2" /><path class="fill" d="M6 7h5v3H6zM1 3h3v3H1z" /></svg>
          <svg class="ic" width="14" height="14" viewBox="0 0 14 14"><path class="line" d="M2 13C2 7 7 2 13 2M5 13c0-4 4-8 8-8M8 13c0-3 2-5 5-5M10.5 13c0-1 1-2 2.5-2" /></svg>
          <span class="lang">ENG</span>
          <span class="clock">16:38<br />17.04.2020</span>
          <svg class="ic note" width="20" height="20" viewBox="0 0 20 20"><path fill="#fff" d="M1 2h13v10H7l-3 3v-3H1z" /><path d="M3 5h9M3 8h7" stroke="#1c2b36" /><circle cx="14" cy="13" r="5.5" fill="#2c3942" stroke="#777" /><path d="M12.5 11.5l2-1.5v6" fill="none" stroke="#fff" /></svg>
        </div>
      </footer>
    `;
  }
}
